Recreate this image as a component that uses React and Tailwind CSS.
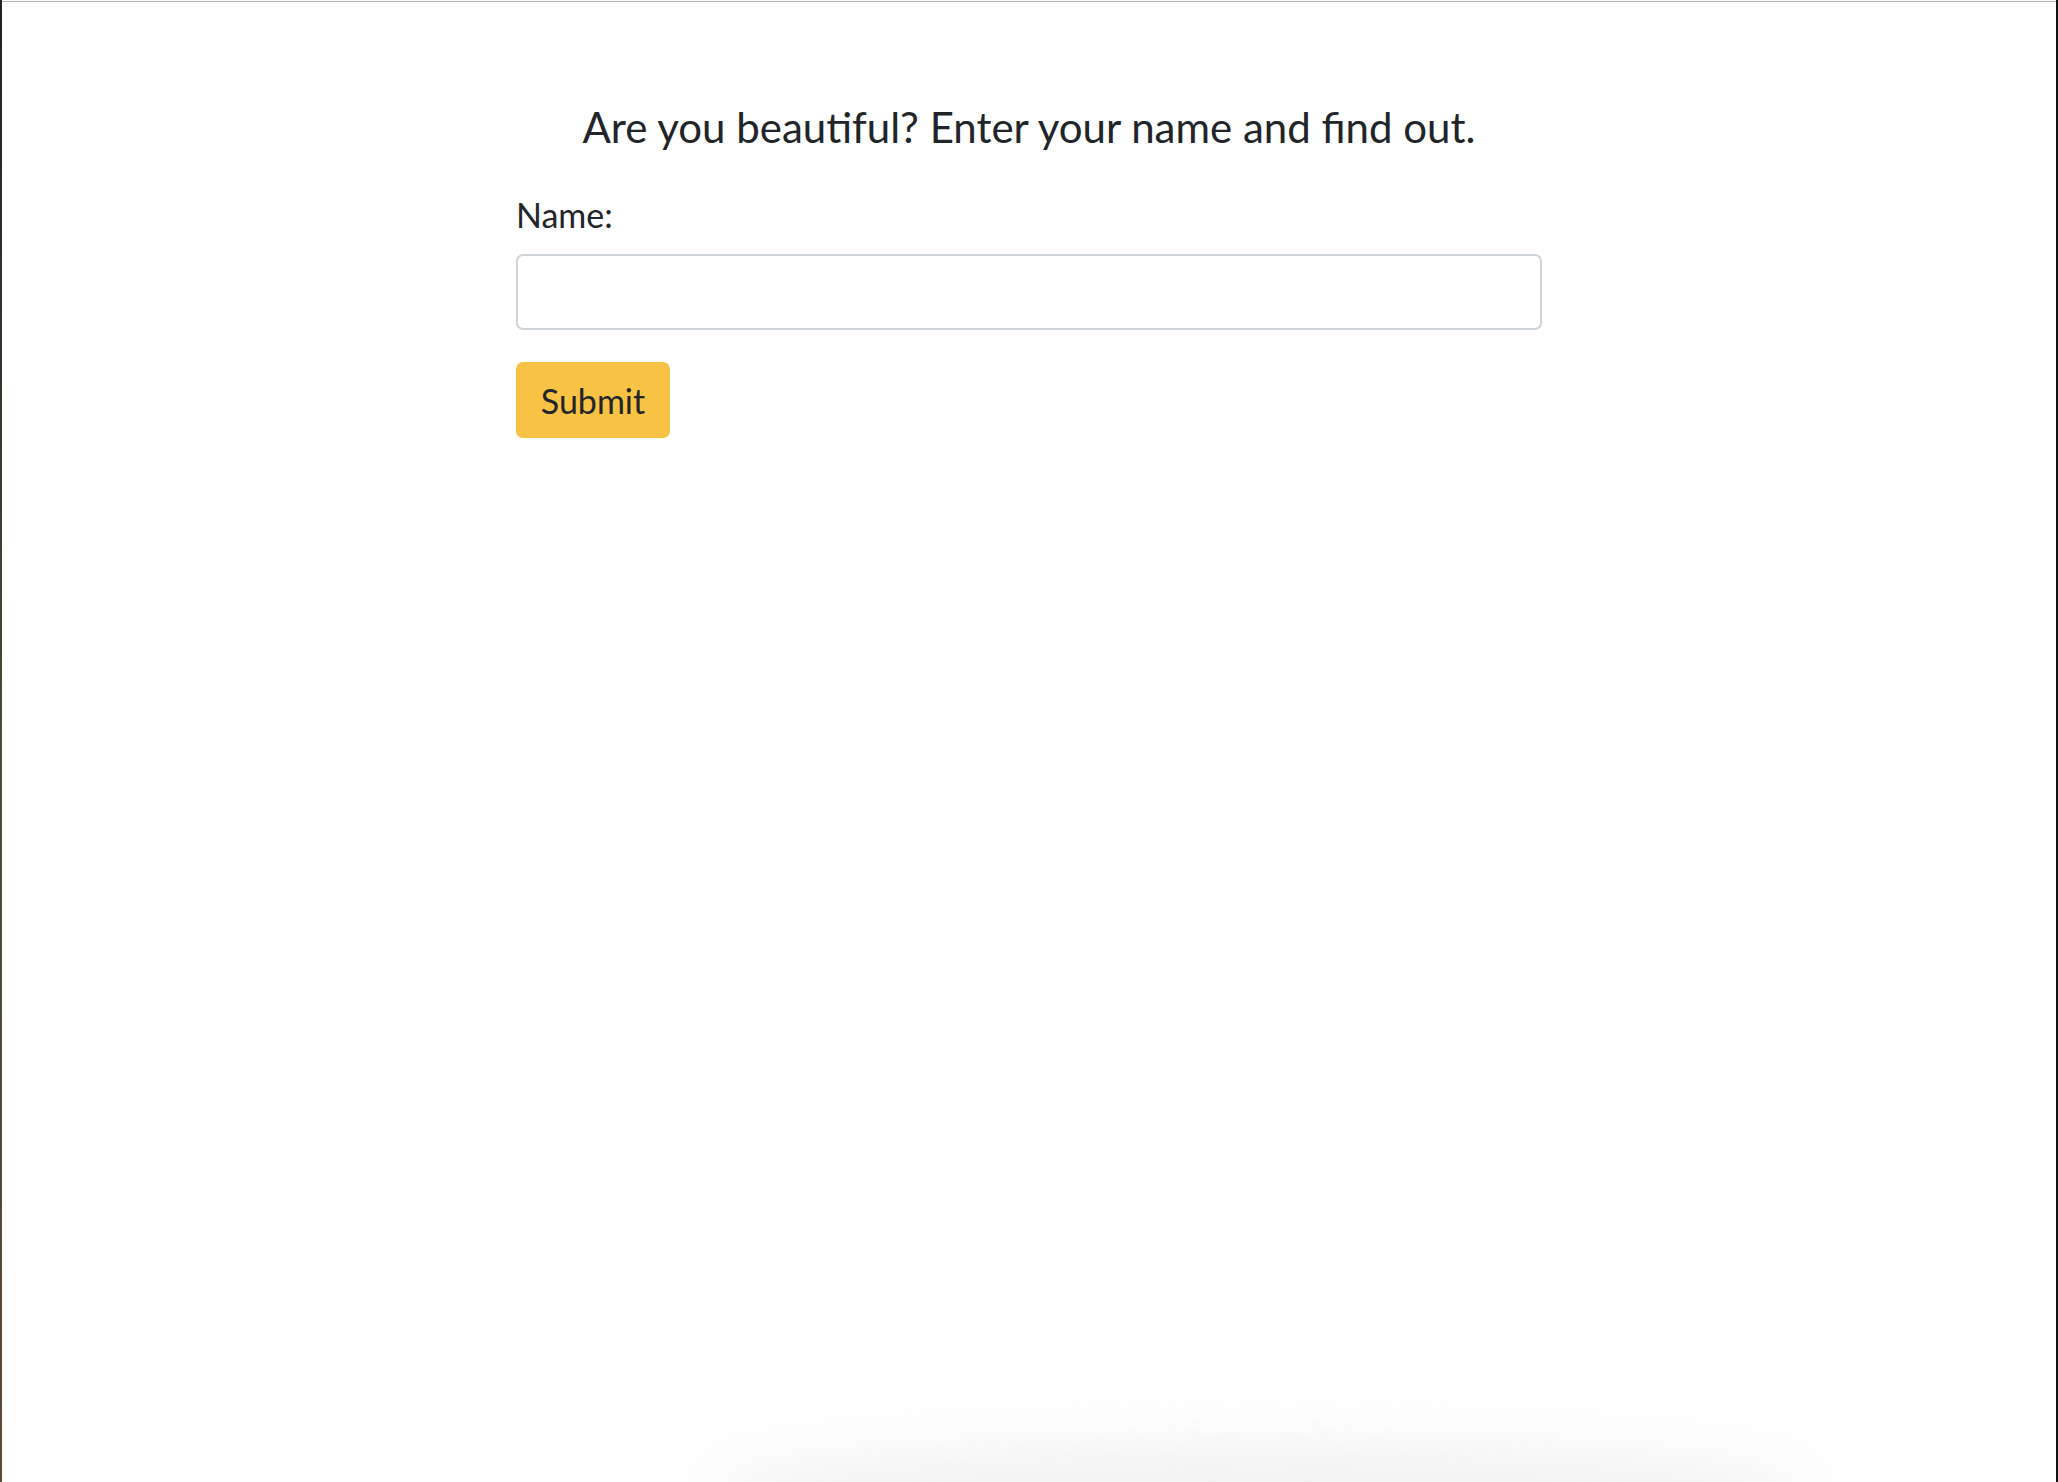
export default function App() {
  return (
    <div className="relative flex min-h-[1482px] w-full bg-white overflow-hidden" style={{ fontFamily: "Lato, 'Noto Sans', sans-serif" }}>
      <div className="w-[2px] shrink-0 bg-gradient-to-b from-[#222] via-[#4a4a38] to-[#5a4a30]" />
      <main className="flex-1 border-t border-[#b4b4b4] mt-px">
        <div className="mx-auto w-[1026px] pt-[101px] text-[#212529]">
          <h1 className="text-center text-[42px] leading-[48px] font-normal">
            Are you beautiful? Enter your name and find out.
          </h1>
          <label htmlFor="name" className="block mt-[44px] text-[34px] leading-[40px] font-normal">Name:</label>
          <input id="name" type="text" className="mt-[19px] block w-full h-[76px] rounded-[7px] border-2 border-[#ced4da] bg-white px-4 text-[32px] outline-none" />
          <button type="button" className="mt-[32px] w-[154px] h-[76px] rounded-[7px] bg-[#f8c244] text-[34px] font-normal text-[#212529]">Submit</button>
        </div>
      </main>
      <div className="w-[2px] shrink-0 bg-[#111]" />
      <div className="pointer-events-none absolute left-[700px] right-[240px] bottom-[-60px] h-[100px] rounded-[50%] bg-[#ececec] blur-[30px] opacity-70" />
    </div>
  );
}
